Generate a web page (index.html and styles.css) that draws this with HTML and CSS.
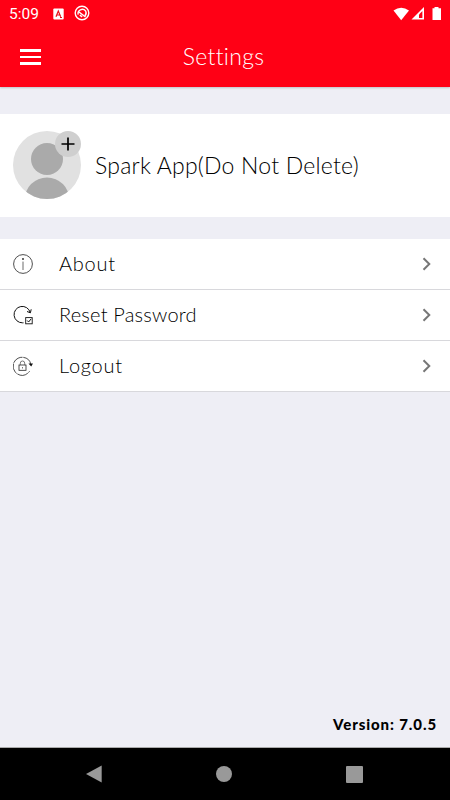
FILE: index.html
```html
<!DOCTYPE html>
<html lang="en">
<head>
    <meta charset="UTF-8">
    <meta name="viewport" content="width=device-width, initial-scale=1.0">
    <title>Settings</title>
    <link rel="stylesheet" href="styles.css">
</head>
<body>
    <header>
        <div class="status-bar">
            <span class="time">5:09</span>
            <svg class="status-app" width="11" height="12" viewBox="0 0 11 12">
                <rect x="0.3" y="0.5" width="10.4" height="11" rx="1" fill="#fff"/>
                <path d="M3 8.7L5.3 3L7.7 8.7M4 7H6.8M7 9.5H9" fill="none" stroke="#e8101c" stroke-width="1.2"/>
            </svg>
            <svg class="status-sync" width="16" height="16" viewBox="0 0 16 16" fill="none" stroke="#fff">
                <circle cx="8" cy="8" r="6.8" stroke-width="1.4"/>
                <path d="M4.2 9.6A4.2 4.2 0 0 1 11.6 6A4.2 4.2 0 0 1 10.8 11" stroke-width="1.4"/>
                <path d="M5 7L11.5 12M5.8 10.2L8.2 11.8" stroke-width="1.5"/>
            </svg>
            <svg class="signals" width="50" height="16" viewBox="0 0 50 16">
                <path d="M0.5 4.5Q8.2 -1.2 16 4.5L8.2 14.3Z" fill="#fff"/>
                <path d="M31 1V13.5H18.5Z" fill="#fff"/>
                <path d="M29.4 5V12H26V8.4Z" fill="#ff0015"/>
                <path d="M41.5 1H45.5V2.3H48V14H39.5V2.3H41.5Z" fill="#fff"/>
            </svg>
        </div>
        <div class="title-bar">
            <div class="menu-icon"><span></span><span></span><span></span></div>
            <h1>Settings</h1>
        </div>
    </header>

    <main>
        <section class="profile">
            <div class="avatar">
                <svg width="68" height="68" viewBox="0 0 68 68">
                    <clipPath id="face"><circle cx="34" cy="34" r="34"/></clipPath>
                    <g clip-path="url(#face)">
                        <rect width="68" height="68" fill="#e1e1e1"/>
                        <circle cx="34" cy="28" r="16" fill="#aaa"/>
                        <circle cx="34" cy="69" r="22.5" fill="#aaa"/>
                    </g>
                </svg>
                <svg class="add-badge" width="26" height="26" viewBox="0 0 26 26">
                    <circle cx="13" cy="13" r="13" fill="#cfcfcf"/>
                    <path d="M13 6.5V19.5M6.5 13H19.5" stroke="#000" stroke-width="1.7"/>
                </svg>
            </div>
            <span class="name">Spark App(Do Not Delete)</span>
        </section>

        <nav class="options">
            <div class="option">
                <svg width="20" height="20" viewBox="0 0 20 20" fill="none" stroke="#222" stroke-width="0.8">
                    <circle cx="10" cy="10" r="9.4"/>
                    <path d="M10 7.6V16" stroke="#444"/>
                    <circle cx="10" cy="5" r="0.9" fill="#222" stroke="none"/>
                </svg>
                <span class="label about">About</span>
                <svg class="chevron" width="10" height="14" viewBox="0 0 10 14"><path d="M1.5 1.2L7.3 7L1.5 12.8"/></svg>
            </div>
            <div class="option">
                <svg width="20" height="20" viewBox="0 0 20 20" fill="none" stroke="#111">
                    <path d="M10.5 17.8H9.5A8.2 8.2 0 1 1 17.2 7.5" stroke-width="1"/>
                    <path d="M14 6.5L17.4 7.8L18.2 4.3" stroke-width="1"/>
                    <rect x="12.7" y="12.6" width="6.5" height="6.2" stroke-width="0.9"/>
                    <path d="M14.2 15.5L15.6 17L18.2 13.8" stroke-width="1"/>
                </svg>
                <span class="label reset">Reset Password</span>
                <svg class="chevron" width="10" height="14" viewBox="0 0 10 14"><path d="M1.5 1.2L7.3 7L1.5 12.8"/></svg>
            </div>
            <div class="option">
                <svg width="20" height="20" viewBox="0 0 20 20" fill="none" stroke="#222" stroke-width="0.8">
                    <path d="M17.9 8.5A9 9 0 1 0 16.6 15.2" stroke-dasharray="11 0.8"/>
                    <path d="M15.5 7.6H20L18.2 10.4Z" fill="#111" stroke="none"/>
                    <rect x="6" y="9" width="7" height="5.3"/>
                    <path d="M7.3 9V7.2A2.2 2.2 0 0 1 11.7 7.2V9M9.5 11V12.5" stroke="#555"/>
                </svg>
                <span class="label logout">Logout</span>
                <svg class="chevron" width="10" height="14" viewBox="0 0 10 14"><path d="M1.5 1.2L7.3 7L1.5 12.8"/></svg>
            </div>
        </nav>

        <p class="version">Version: 7.0.5</p>
    </main>

    <footer>
        <svg width="16" height="18" viewBox="0 0 16 18"><path d="M15.7 0.5V17.5L0 9Z" fill="#999"/></svg>
        <svg width="16" height="16" viewBox="0 0 16 16"><circle cx="8" cy="8" r="8" fill="#999"/></svg>
        <svg width="17" height="17" viewBox="0 0 17 17"><rect width="17" height="17" rx="1" fill="#999"/></svg>
    </footer>
</body>
</html>
```
FILE: styles.css
```css
* {
    box-sizing: border-box;
}
body {
    margin: 0;
    height: 800px;
    display: flex;
    flex-direction: column;
    overflow: hidden;
    background-color: #eeeef5;
    color: #000;
    font-family: Lato, sans-serif;
    font-weight: 300;
}
header {
    height: 87px;
    background-color: #ff0015;
    color: #fff;
    box-shadow: 0 1px 2px rgba(0, 0, 0, 0.2);
}
.status-bar {
    display: flex;
    align-items: center;
    height: 27px;
    padding: 0 7px 0 9px;
}
.time {
    width: 44px;
    font-family: Roboto, sans-serif;
    font-size: 15.5px;
    font-weight: 400;
}
.status-sync {
    margin: 0 0 2px 10px;
}
.signals {
    margin-left: auto;
}
.title-bar {
    display: grid;
    grid-template-columns: 1fr auto 1fr;
    align-items: center;
    height: 60px;
    padding: 0 23px 0 20px;
}
.menu-icon {
    display: grid;
    gap: 4px;
    width: 21px;
}
.menu-icon span {
    height: 2.4px;
    background-color: #fff;
}
h1 {
    margin: 0;
    padding-bottom: 2px;
    font-size: 23px;
    font-weight: 300;
    letter-spacing: 0.3px;
}
main {
    flex: 1;
    display: flex;
    flex-direction: column;
    border-bottom: 1px solid #aaa;
}
.profile {
    display: flex;
    align-items: center;
    gap: 14px;
    height: 103px;
    margin-top: 27px;
    padding: 0 0 1px 13px;
    background-color: #fff;
}
.avatar {
    position: relative;
    height: 68px;
}
.add-badge {
    position: absolute;
    top: 0;
    right: 0;
}
.name {
    padding-bottom: 1px;
    font-size: 23px;
    letter-spacing: 0.23px;
}
.options {
    margin-top: 22px;
}
.option {
    display: flex;
    align-items: center;
    height: 51px;
    padding: 0 18px 0 13px;
    border-bottom: 1px solid #d8d8dc;
    background-color: #fff;
}
.label {
    margin-left: 26px;
    padding-bottom: 2px;
    font-size: 20px;
    letter-spacing: 0.75px;
}
.reset {
    letter-spacing: 0.2px;
}
.chevron {
    margin-left: auto;
    fill: none;
    stroke: #777;
    stroke-width: 2;
}
.version {
    margin: auto 13px 13px auto;
    font-size: 15px;
    font-weight: 900;
    line-height: 20px;
    letter-spacing: 0.9px;
}
footer {
    display: flex;
    justify-content: space-between;
    align-items: center;
    height: 52px;
    padding: 0 87px 0 86px;
    background-color: #000;
}
```
